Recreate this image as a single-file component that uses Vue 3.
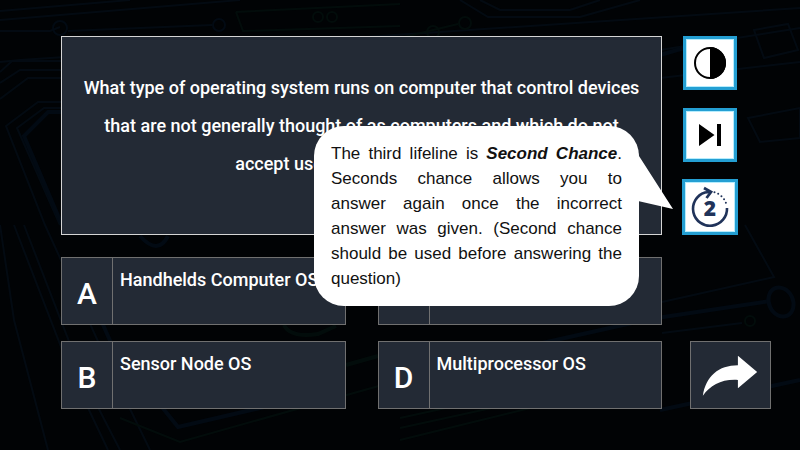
<script setup>
const questionLines = [
  'What type of operating system runs on computer that control devices',
  'that are not generally thought of as computers and which do not',
  'accept user-installed software?',
]

const hintLines = [
  'Seconds chance allows you to',
  'answer again once the incorrect',
  'answer was given. (Second chance',
  'should be used before answering the',
]

const answers = [
  { letter: 'A', text: 'Handhelds Computer OS' },
  { letter: 'C', text: '' },
  { letter: 'B', text: 'Sensor Node OS' },
  { letter: 'D', text: 'Multiprocessor OS' },
]
</script>

<template>
  <main class="quiz">
    <svg class="circuit" viewBox="0 0 800 450" preserveAspectRatio="xMidYMid slice" aria-hidden="true">
      <g fill="none" stroke="#05101b" stroke-width="2">
        <path d="M0 11 L130 0 M0 20 L240 0 M0 31 H50 L60 27 M68 31 L212 25 M0 62 L20 60 L800 8" />
        <path d="M0 72 L12 61 H62 M0 83 L20 70 H62 M0 99 L28 78 H62 M62 102 H38 L6 126 L45 225 L112 372 L150 450 M62 108 H44 L17 128 L60 225" />
        <path d="M0 225 L14 320 L48 450 M14 225 L70 370 L108 450 M24 225 L84 380 L120 450" />
        <path d="M460 0 L488 17 H580 L640 0 M480 0 L500 10 H570 L600 0 M660 50 L800 28 M660 78 L800 62" />
        <path d="M754 30 L788 24 L798 50 L764 58 Z M748 118 L800 108 V138 L760 142 Z M745 225 L774 277 L662 302 M662 333 L742 323" />
      </g>
      <g fill="none" stroke="#030f1d" stroke-width="4">
        <path d="M62 112 H48 L24 136 L62 225 M520 348 L650 319 L770 301 M92 300 L112 345 L178 427 L346 388 M660 410 L800 380" />
        <ellipse cx="781" cy="302" rx="12" ry="15" transform="rotate(-25 781 302)" />
        <circle cx="219" cy="25" r="6" stroke-width="2" />
        <circle cx="60" cy="28" r="7" stroke-width="2" />
        <path d="M140 236 Q158 256 168 236 M660 55 L684 48" />
      </g>
      <g fill="none" stroke="#04130f" stroke-width="2">
        <path d="M236 12 L400 4 M236 12 L243 31 L400 26 M400 38 L458 24 M400 440 L660 376 M400 428 L620 380 M400 418 L560 383 M120 418 L180 442 L400 380" />
        <path d="M284 325 Q290 338 318 334 L336 326 M346 302 L378 296 M346 365 L378 356" stroke-width="4" />
        <circle cx="465" cy="23" r="6" />
        <circle cx="433" cy="32" r="6" />
        <circle cx="318" cy="17" r="5" />
        <circle cx="332" cy="17" r="5" />
        <circle cx="750" cy="321" r="5" />
      </g>
    </svg>

    <section class="board">
      <h1 class="question">
        <span v-for="line in questionLines" :key="line" class="line">{{ line }}</span>
      </h1>
      <div class="bubble" role="note">
        <svg class="tail" viewBox="0 0 36 58" aria-hidden="true">
          <path d="M0 0 L1 3 L35 56 L0 48 Z" fill="#fff" />
        </svg>
        <p class="hint">
          <span class="full-line">The third lifeline is <strong>Second Chance</strong>.</span>
          <span v-for="line in hintLines" :key="line" class="full-line">{{ line }}</span>
          <span class="line">question)</span>
        </p>
      </div>
    </section>

    <aside class="lifelines">
      <button class="lifeline" type="button" aria-label="Fifty fifty">
        <svg viewBox="0 0 48 48" width="48" height="48" aria-hidden="true">
          <circle cx="24" cy="24" r="15" fill="#fff" stroke="#000" stroke-width="2" />
          <path d="M24 8 A16 16 0 0 1 24 40 Z" />
        </svg>
      </button>
      <button class="lifeline" type="button" aria-label="Skip question">
        <svg viewBox="0 0 48 48" width="48" height="48" aria-hidden="true">
          <path d="M13 13 L28.500 24 L13 35 Z M31 13 H35 V35 H31 Z" />
        </svg>
      </button>
      <button class="lifeline large" type="button" aria-label="Second chance">
        <svg viewBox="0 0 50 50" width="50" height="50" aria-hidden="true">
          <g fill="none" stroke="#20335a" stroke-width="2.600">
            <path d="M42 26 A17 17 0 1 1 20 10.500 L25 10" />
            <path d="M19 6 L26 10 L21.500 16" stroke-width="2.800" />
            <path d="M29.500 10.300 A17 17 0 0 1 41.500 23" stroke-width="2" stroke-linecap="round" stroke-dasharray="0 4" />
          </g>
          <text class="two" x="25" y="34" text-anchor="middle">2</text>
        </svg>
      </button>
    </aside>

    <section class="answers">
      <button v-for="answer in answers" :key="answer.letter" class="answer" type="button">
        <span class="letter">{{ answer.letter }}</span>
        <span class="label">{{ answer.text }}</span>
      </button>
    </section>

    <button class="next" type="button" aria-label="Next question">
      <svg viewBox="0 0 80 66" width="79" height="66" aria-hidden="true">
        <path d="M12 54 C15 34 28 23 47.500 23 V13.500 L67 30 L47.500 46.500 V38 C31 37 20 43 12 54 Z" fill="#fff" />
      </svg>
    </button>
  </main>
</template>

<style>
body {
  background: #010305;
}
</style>

<style scoped>
.quiz {
  position: relative;
  box-sizing: border-box;
  min-height: 100vh;
  padding: 36px 29px 41px 61px;
  display: grid;
  grid-template-columns: minmax(0, 1fr) 89px;
  align-content: start;
  gap: 22px 20px;
  background: #010305;
  color: #fff;
  font-family: Roboto, "Liberation Sans", sans-serif;
}

.circuit {
  position: absolute;
  inset: 0;
  width: 100%;
  height: 100%;
  opacity: 0.6;
}

button {
  margin: 0;
  padding: 0;
  font: inherit;
  color: inherit;
  cursor: pointer;
}

svg {
  display: block;
}

.board {
  position: relative;
  z-index: 2;
  box-sizing: border-box;
  min-height: 199px;
  padding: 32px 8px;
  background: #232a35;
  border: 1px solid #d5d5d5;
}

.question {
  margin: 0;
  font-size: 18px;
  font-weight: 500;
  line-height: 38px;
  text-align: center;
}

.line {
  display: block;
  white-space: nowrap;
}

.bubble {
  position: absolute;
  top: 89px;
  right: 22px;
  box-sizing: border-box;
  width: 325px;
  min-height: 180px;
  padding: 15px 17px;
  border-radius: 30px;
  background: #fff;
  color: #111;
}

.tail {
  position: absolute;
  top: 27px;
  left: 324px;
  width: 36px;
  height: 58px;
}

.hint {
  margin: 0;
  font-family: "Liberation Sans", sans-serif;
  font-size: 17px;
  line-height: 25px;
}

.full-line {
  display: block;
  text-align: justify;
  text-align-last: justify;
}

.hint strong {
  font-style: italic;
}

.lifelines {
  position: relative;
  width: 56px;
  display: flex;
  flex-direction: column;
  align-items: center;
  justify-content: space-between;
}

.lifeline {
  box-sizing: border-box;
  width: 54px;
  height: 54px;
  display: grid;
  place-items: center;
  background: #fff;
  border: 3px solid #249fd3;
  box-shadow: inset 0 0 0 1px #b5ecfd;
}

.lifeline.large {
  width: 56px;
  height: 56px;
}

.two {
  font-family: "Open Sans", sans-serif;
  font-size: 21px;
  font-weight: 800;
  fill: #20335a;
}

.answers {
  position: relative;
  z-index: 1;
  display: grid;
  grid-template-columns: 1fr 1fr;
  gap: 16px 32px;
}

.answer {
  box-sizing: border-box;
  min-height: 68px;
  display: flex;
  align-items: stretch;
  text-align: left;
  background: #232a35;
  border: 1px solid #707070;
}

.letter {
  flex: none;
  width: 51px;
  padding-top: 4px;
  box-sizing: border-box;
  display: grid;
  place-items: center;
  border-right: 1px solid #707070;
  font-size: 30px;
  font-weight: 500;
}

.label {
  padding: 10px 7px;
  font-size: 18px;
  font-weight: 500;
  line-height: 24px;
}

.next {
  position: relative;
  box-sizing: border-box;
  width: 81px;
  height: 68px;
  justify-self: end;
  align-self: end;
  background: #232a35;
  border: 1px solid #707070;
}
</style>
